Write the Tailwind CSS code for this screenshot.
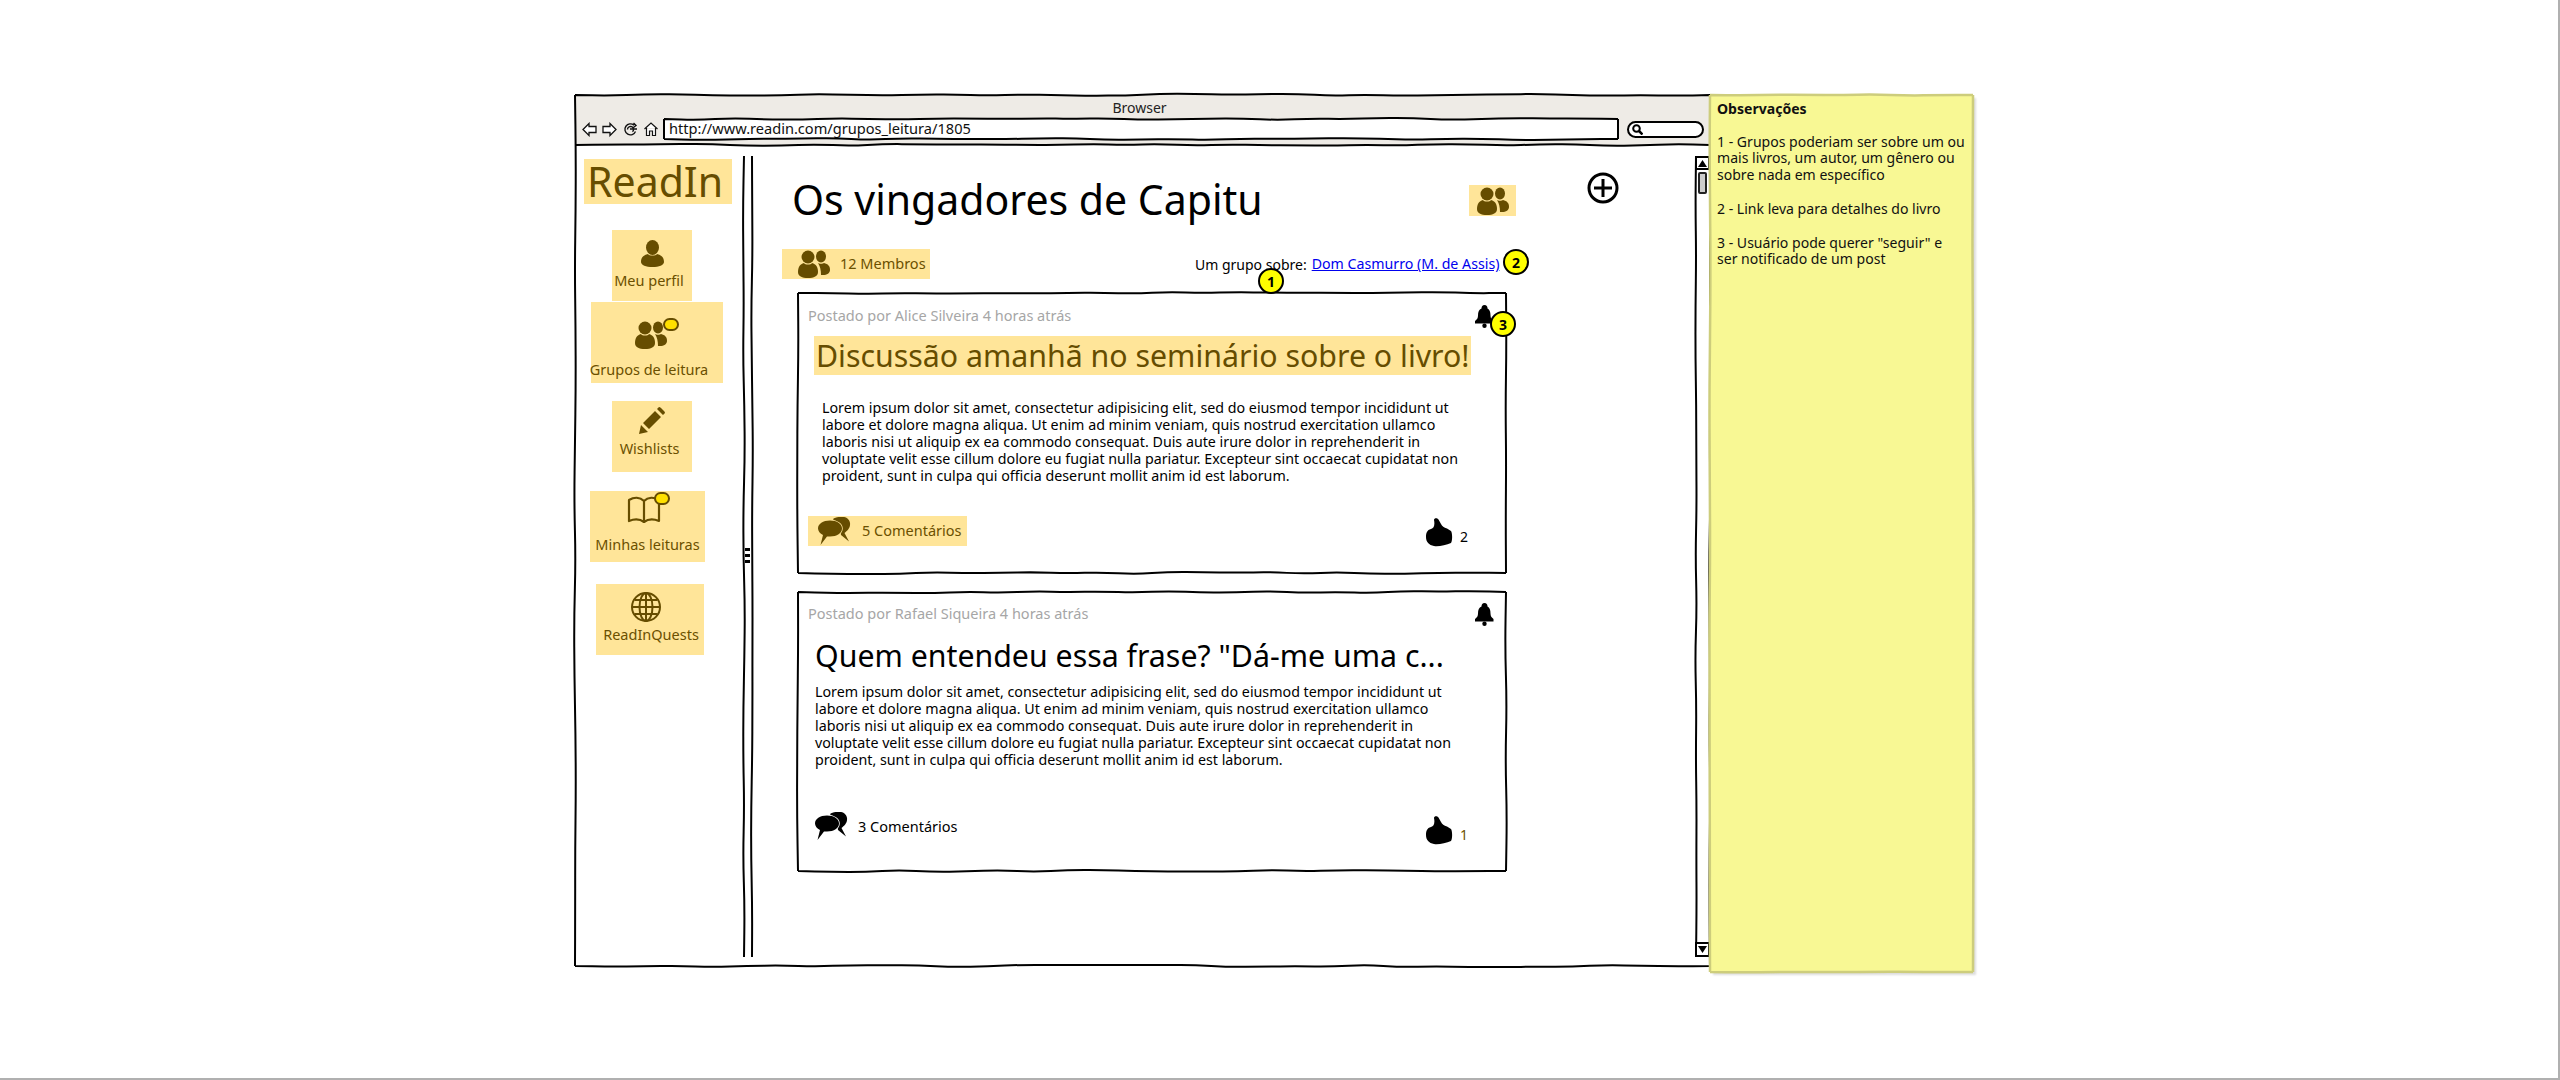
<!DOCTYPE html>
<html lang="pt-BR">
<head>
    <meta charset="UTF-8">
    <title>ReadIn - Grupo de leitura</title>
    <script src="https://cdn.jsdelivr.net/npm/@tailwindcss/browser@4"></script>
</head>
<body class="bg-white text-black font-['Noto_Sans',sans-serif] overflow-hidden">
    <!-- icon set -->
    <svg class="hidden">
        <symbol id="i-person" viewBox="0 0 23 27"><ellipse cx="11.500" cy="7.500" rx="6.500" ry="7.500"/><path d="M7 14c1 2 8 2 9 0 4 1 7 3 7 8 0 3-5 5-11.500 5S0 25 0 22c0-5 3-7 7-8z"/></symbol>
        <symbol id="i-group" viewBox="0 0 32 28"><circle cx="10" cy="7" r="6.500"/><path d="M6 13c1 2 7 2 8 0 4 1 6 4 6 9 0 4-4 6-10 6S0 26 0 22c0-5 2-8 6-9z"/><ellipse cx="23" cy="6.500" rx="5" ry="6"/><path d="M20 13c1 1 5 1 6 0 4 1 6 3 6 7 0 3-3 5-7 5h-2c0-5-1-9-3-12z"/></symbol>
        <symbol id="i-pencil" viewBox="0 0 26 27"><path d="M0 27l2-9 7 7zM4 16L16 4l6 6-12 12zM18 2l2-2q1 0 2 1l3 3q1 1 1 2l-2 2z"/></symbol>
        <symbol id="i-bell" viewBox="0 0 19 23"><path d="M9.500 0c2 0 3 1.500 3 3.500 2 1 3 3.500 3 7 0 2.500 1 4 3 5.500v2.500H0V16c2-1.500 3-3 3-5.500 0-3.500 1-6 3.500-7C6.500 1.500 7.500 0 9.500 0z"/><circle cx="9.500" cy="20.800" r="2.200"/></symbol>
        <symbol id="i-thumb" viewBox="0 0 27 29"><path d="M8 2C8 0 11-.5 12.500 1.500L15 6c1 2 3 4 6 4.500l4 2.500c1.500 2 1.500 10 0 12-5 2-13 4-17 3-5-1-8-4-8-9 0-4 1-7 5-8 3-1 4-4 3-9z"/></symbol>
        <symbol id="i-talk" viewBox="0 0 33 29"><path d="M15 2c3-2 9-3 13-1.500 3 1.500 4.500 4.500 4 7.500 0 3-3 6-5.500 8l4.500 8.500L23 18l-1-6z"/><path d="M12 3.500c7 0 12 3.500 12 8s-5 8-12 8H9L2.500 28 5 18c-3-1.500-5-4-5-6.500 0-4.500 5-8 12-8z" stroke="currentColor" stroke-width="1.500" paint-order="stroke"/></symbol>
    </svg>

    <div class="flex h-[1080px]">
    <div class="flex-1 flex flex-col">
        <div class="flex-1 pl-[575px] pt-[95px] flex items-start">

            <!-- browser window -->
            <div class="relative w-[1135px] h-[871px] flex flex-col">
                <div class="h-[50px] bg-[#eeebe6] flex flex-col">
                    <div class="h-[24px] flex items-center justify-center pr-[6px] text-[14px] text-[#222]">Browser</div>
                    <div class="flex items-center h-[20px] pl-[7px]">
                        <svg class="w-[15px] h-[15px]" viewBox="0 0 15 15" fill="#fff" stroke="#111" stroke-width="1.300"><path d="M1 7.500L7 1.500v3h7v6H7v3z"/></svg>
                        <svg class="w-[15px] h-[15px] ml-[5px]" viewBox="0 0 15 15" fill="#fff" stroke="#111" stroke-width="1.300"><path d="M14 7.500L8 1.500v3H1v6h7v3z"/></svg>
                        <svg class="w-[15px] h-[15px] ml-[6px]" viewBox="0 0 15 15" fill="none" stroke="#111" stroke-width="1.400"><path d="M12.500 9.500A5.500 5.500 0 1 1 11 3.200M4.500 7.500a3 3 0 1 1 5 2.200M7 7h7M10.500 1l2.500 2.500-2.500 2"/></svg>
                        <svg class="w-[14px] h-[14px] ml-[6px]" viewBox="0 0 14 14" fill="#fff" stroke="#111" stroke-width="1.200"><path d="M.5 7L7 1l6.500 6M2.500 6v7.500h3V9h3v4.500h3V6"/></svg>
                        <div class="relative ml-[6px] w-[954px] h-[20px] bg-white flex items-center pl-[5px] text-[14.600px] whitespace-nowrap text-[#111]">
                            http://www.readin.com/grupos_leitura/1805
                            <svg data-box data-w="954" data-h="20" class="absolute inset-0 w-full h-full overflow-visible"></svg>
                        </div>
                        <div class="ml-[9px] w-[77px] h-[17px] bg-white rounded-full border-2 border-black flex items-center pl-[3px]">
                            <svg class="w-[11px] h-[11px]" viewBox="0 0 11 11" fill="none" stroke="#000"><circle cx="4.500" cy="4.500" r="3.300" stroke-width="2"/><path d="M7 7l3.500 3.500" stroke-width="2.500"/></svg>
                        </div>
                    </div>
                </div>

                <div class="relative flex flex-1 pt-[11px]">
                    <svg data-hline data-w="1135" class="absolute left-0 top-0 w-full h-[2px] overflow-visible"></svg>

                    <!-- sidebar -->
                    <div class="w-[168px] text-[#6b5000] text-[14.500px]">
                        <div class="ml-[9px] mt-[3px] w-[148px] h-[45px] bg-[#ffe599] pl-[3px] text-[41px] leading-[45px] text-[#664d00]">ReadIn</div>
                        <a class="mt-[26px] ml-[37px] w-[80px] h-[71px] bg-[#ffe599] flex flex-col items-center pt-[10px]">
                            <svg class="w-[23px] h-[27px] fill-[#664d00]"><use href="#i-person"/></svg>
                            <span class="mt-[3px] mr-[6px]">Meu perfil</span>
                        </a>
                        <a class="mt-[1px] ml-[16px] w-[132px] h-[81px] bg-[#ffe599] flex flex-col items-center pt-[19px] relative">
                            <svg class="w-[32px] h-[28px] mr-[12px] fill-[#664d00]"><use href="#i-group"/></svg>
                            <span class="absolute left-[72px] top-[16px] w-[16px] h-[13px] rounded-full bg-[#ffe000] border-2 border-[#664d00]"></span>
                            <span class="mt-[10px] mr-[16px] whitespace-nowrap">Grupos de leitura</span>
                        </a>
                        <a class="mt-[18px] ml-[37px] w-[80px] h-[71px] bg-[#ffe599] flex flex-col items-center pt-[6px]">
                            <svg class="w-[26px] h-[27px] fill-[#664d00]"><use href="#i-pencil"/></svg>
                            <span class="mt-[4px] mr-[5px]">Wishlists</span>
                        </a>
                        <a class="mt-[19px] ml-[15px] w-[115px] h-[71px] bg-[#ffe599] flex flex-col items-center pt-[5px] relative">
                            <svg class="w-[34px] h-[27px] mr-[8px]" viewBox="0 0 34 27" fill="none" stroke="#664d00" stroke-width="2.200" stroke-linejoin="round"><path d="M2 4c5-3 11-3 15 1 4-4 10-4 15-1v21c-5-2-11-2-15 1-4-3-10-3-15-1zM17 5v21"/></svg>
                            <span class="absolute left-[64px] top-[1px] w-[16px] h-[13px] rounded-full bg-[#ffe000] border-2 border-[#664d00]"></span>
                            <span class="mt-[11px] whitespace-nowrap">Minhas leituras</span>
                        </a>
                        <a class="mt-[22px] ml-[21px] w-[108px] h-[71px] bg-[#ffe599] flex flex-col items-center pt-[8px]">
                            <svg class="w-[30px] h-[30px] mr-[8px]" viewBox="0 0 30 30" fill="none" stroke="#664d00" stroke-width="2"><circle cx="15" cy="15" r="14"/><ellipse cx="15" cy="15" rx="6.500" ry="14"/><path d="M15 1v28M1 15h28M3.500 8h23M3.500 22h23"/></svg>
                            <span class="mt-[2px] ml-[2px]">ReadInQuests</span>
                        </a>
                    </div>

                    <!-- splitter -->
                    <div class="relative w-[9px]">
                        <svg data-vline data-h="801" class="absolute left-0 top-0 w-[2px] h-[801px] overflow-visible"></svg>
                        <svg data-vline data-h="801" class="absolute left-[8px] top-0 w-[2px] h-[801px] overflow-visible"></svg>
                        <div class="absolute left-[2px] top-[392px] w-[5px] h-[15px] flex flex-col justify-between items-center bg-white">
                            <span class="w-[5px] h-[3px] bg-black"></span><span class="w-[5px] h-[3px] bg-black"></span><span class="w-[5px] h-[3px] bg-black"></span>
                        </div>
                    </div>

                    <!-- main content -->
                    <div class="relative flex-1 min-w-0">
                        <div class="flex items-start h-[93px]">
                            <h1 class="ml-[40px] mt-[19px] w-[677px] text-[41px] leading-[48px] whitespace-nowrap">Os vingadores de Capitu</h1>
                            <div class="mt-[29px] w-[47px] h-[31px] bg-[#ffe599] flex items-center justify-center">
                                <svg class="w-[32px] h-[28px] fill-[#664d00]"><use href="#i-group"/></svg>
                            </div>
                            <svg class="mt-[16px] ml-[71px] w-[32px] h-[32px]" viewBox="0 0 32 32" fill="none" stroke="#000" stroke-width="3"><circle cx="16" cy="16" r="14"/><path d="M16 7v18M7 16h18"/></svg>
                        </div>
                        <div class="flex items-center h-[30px] ml-[30px] relative">
                            <div class="w-[148px] h-[30px] bg-[#ffe599] flex items-center pl-[16px] text-[#6b5000] text-[14.500px]">
                                <svg class="w-[32px] h-[28px] fill-[#664d00]"><use href="#i-group"/></svg>
                                <span class="ml-[10px]">12 Membros</span>
                            </div>
                            <span class="ml-[265px] text-[14px] whitespace-nowrap">Um grupo sobre:</span>
                            <a class="ml-[5px] text-[14.200px] text-[#0000ee] underline whitespace-nowrap">Dom Casmurro (M. de Assis)</a>
                        </div>

                        <!-- post 1 -->
                        <div class="relative ml-[46px] mt-[14px] w-[708px] h-[280px] bg-white">
                            <svg data-box data-w="708" data-h="280" class="absolute inset-0 w-full h-full overflow-visible"></svg>
                            <div class="relative flex justify-between pt-[12px] pl-[10px] pr-[12px] h-[35px]">
                                <span class="text-[14.500px] leading-[21px] text-[#a6a6a6]">Postado por Alice Silveira 4 horas atrás</span>
                                <svg class="w-[19px] h-[23px]"><use href="#i-bell"/></svg>
                            </div>
                            <h2 class="relative ml-[16px] mt-[8px] w-[657px] h-[39px] bg-[#ffe599] pl-[2px] text-[30.300px] leading-[39px] text-[#664d00] whitespace-nowrap">Discussão amanhã no seminário sobre o livro!</h2>
                            <p class="relative ml-[24px] mt-[24px] text-[14.250px] leading-[17px] whitespace-nowrap">Lorem ipsum dolor sit amet, consectetur adipisicing elit, sed do eiusmod tempor incididunt ut<br>labore et dolore magna aliqua. Ut enim ad minim veniam, quis nostrud exercitation ullamco<br>laboris nisi ut aliquip ex ea commodo consequat. Duis aute irure dolor in reprehenderit in<br>voluptate velit esse cillum dolore eu fugiat nulla pariatur. Excepteur sint occaecat cupidatat non<br>proident, sunt in culpa qui officia deserunt mollit anim id est laborum.</p>
                            <div class="relative flex justify-between items-start mt-[32px] pl-[10px] pr-[38px]">
                                <div class="w-[159px] h-[30px] bg-[#ffe599] flex items-center pl-[10px] text-[#6b5000] text-[14.500px]">
                                    <svg class="w-[33px] h-[29px] fill-[#664d00] text-[#ffe599]"><use href="#i-talk"/></svg>
                                    <span class="ml-[11px]">5 Comentários</span>
                                </div>
                                <div class="flex items-center mt-[2px]">
                                    <svg class="w-[27px] h-[29px]"><use href="#i-thumb"/></svg>
                                    <span class="ml-[7px] mt-[8px] text-[14px]">2</span>
                                </div>
                            </div>
                        </div>

                        <!-- post 2 -->
                        <div class="relative ml-[46px] mt-[19px] w-[708px] h-[279px] bg-white">
                            <svg data-box data-w="708" data-h="279" class="absolute inset-0 w-full h-full overflow-visible"></svg>
                            <div class="relative flex justify-between pt-[11px] pl-[10px] pr-[12px] h-[34px]">
                                <span class="text-[14.500px] leading-[21px] text-[#a6a6a6]">Postado por Rafael Siqueira 4 horas atrás</span>
                                <svg class="w-[19px] h-[23px]"><use href="#i-bell"/></svg>
                            </div>
                            <h2 class="relative ml-[17px] mt-[10px] h-[39px] text-[30.300px] leading-[39px] whitespace-nowrap">Quem entendeu essa frase? "Dá-me uma c...</h2>
                            <p class="relative ml-[17px] mt-[8px] text-[14.250px] leading-[17px] whitespace-nowrap">Lorem ipsum dolor sit amet, consectetur adipisicing elit, sed do eiusmod tempor incididunt ut<br>labore et dolore magna aliqua. Ut enim ad minim veniam, quis nostrud exercitation ullamco<br>laboris nisi ut aliquip ex ea commodo consequat. Duis aute irure dolor in reprehenderit in<br>voluptate velit esse cillum dolore eu fugiat nulla pariatur. Excepteur sint occaecat cupidatat non<br>proident, sunt in culpa qui officia deserunt mollit anim id est laborum.</p>
                            <div class="relative flex justify-between items-start mt-[44px] pl-[17px] pr-[38px]">
                                <div class="flex items-center text-[14.500px]">
                                    <svg class="w-[33px] h-[29px] text-white"><use href="#i-talk"/></svg>
                                    <span class="ml-[10px]">3 Comentários</span>
                                </div>
                                <div class="flex items-center mt-[4px]">
                                    <svg class="w-[27px] h-[29px]"><use href="#i-thumb"/></svg>
                                    <span class="ml-[7px] mt-[8px] text-[14px] text-[#6b5000]">1</span>
                                </div>
                            </div>
                        </div>

                        <!-- numbered markers -->
                        <span class="absolute left-[506px] top-[112px] w-[26px] h-[26px] rounded-full bg-[#ffff00] border-2 border-black flex items-center justify-center text-[14px] font-bold">1</span>
                        <span class="absolute left-[751px] top-[93px] w-[26px] h-[26px] rounded-full bg-[#ffff00] border-2 border-black flex items-center justify-center text-[14px] font-bold">2</span>
                        <span class="absolute left-[738px] top-[155px] w-[26px] h-[26px] rounded-full bg-[#ffff00] border-2 border-black flex items-center justify-center text-[14px] font-bold">3</span>
                    </div>

                    <!-- scrollbar -->
                    <div class="relative w-[15px] h-[801px] flex flex-col justify-between">
                        <svg data-vline data-h="801" class="absolute left-0 top-0 w-[2px] h-full overflow-visible"></svg>
                        <div class="relative h-[14px] border-2 border-black bg-white flex items-center justify-center">
                            <svg class="w-[9px] h-[7px]" viewBox="0 0 9 7"><path d="M4.500 0L9 7H0z"/></svg>
                        </div>
                        <div class="absolute left-[3px] top-[16px] w-[9px] h-[22px] bg-[#ccc] border-2 border-[#222] rounded-[2px]"></div>
                        <div class="relative h-[15px] border-2 border-black bg-white flex items-center justify-center">
                            <svg class="w-[9px] h-[7px]" viewBox="0 0 9 7"><path d="M4.500 7L0 0h9z"/></svg>
                        </div>
                    </div>
                </div>

                <svg data-box data-w="1135" data-h="871" class="absolute inset-0 w-full h-full overflow-visible"></svg>
            </div>

            <!-- sticky note -->
            <div class="relative w-[263px] h-[877px] bg-[#f8f894] shadow-[3px_3px_2px_#ddd] pl-[7px] pt-[6px] text-[14.050px] leading-[16.700px] text-[#111] whitespace-nowrap">
                <svg data-note data-w="263" data-h="877" class="absolute inset-0 w-full h-full overflow-visible"></svg>
                <p class="relative font-bold">Observações</p>
                <p class="relative mt-[16px]">1 - Grupos poderiam ser sobre um ou<br>mais livros, um autor, um gênero ou<br>sobre nada em específico</p>
                <p class="relative mt-[17px]">2 - Link leva para detalhes do livro</p>
                <p class="relative mt-[17px]">3 - Usuário pode querer "seguir" e<br>ser notificado de um post</p>
            </div>
        </div>
        <div class="h-[2px] bg-[#b0b0b0]"></div>
    </div>
    <div class="w-[2px] bg-[#b0b0b0]"></div>
    </div>

    <script>
        // hand drawn lines, same seed every run so the picture stays stable
        let seed = 7;
        function rnd() {
            seed = (seed * 16807) % 2147483647;
            return seed / 2147483647;
        }

        function wobble(x1, y1, x2, y2, step, amp) {
            const len = Math.hypot(x2 - x1, y2 - y1);
            const n = Math.max(1, Math.round(len / step));
            const nx = (y2 - y1) / len, ny = (x1 - x2) / len;
            let pts = [];
            for (let i = 0; i <= n; i++) {
                const t = i / n;
                const off = (i == 0 || i == n) ? 0 : (rnd() - 0.5) * amp * 2;
                pts.push([x1 + (x2 - x1) * t + nx * off, y1 + (y2 - y1) * t + ny * off]);
            }
            let d = `M${pts[0][0]} ${pts[0][1]}`;
            for (let i = 1; i < pts.length; i++) {
                const mx = (pts[i - 1][0] + pts[i][0]) / 2, my = (pts[i - 1][1] + pts[i][1]) / 2;
                d += `Q${pts[i - 1][0]} ${pts[i - 1][1]} ${mx} ${my}`;
            }
            return d + `L${x2} ${y2}`;
        }

        function draw(svg, d, color, width) {
            svg.innerHTML = `<path d="${d}" fill="none" stroke="${color}" stroke-width="${width}"/>`;
        }

        function boxPath(w, h, amp) {
            return wobble(0, 0, w, 0, 34, amp) + wobble(w, 0, w, h, 60, amp * 0.8) +
                wobble(w, h, 0, h, 34, amp) + wobble(0, h, 0, 0, 60, amp * 0.8);
        }

        document.querySelectorAll("[data-box]").forEach(svg => {
            draw(svg, boxPath(+svg.dataset.w, +svg.dataset.h, 1.2), "#000", 2);
        });
        document.querySelectorAll("[data-note]").forEach(svg => {
            draw(svg, boxPath(+svg.dataset.w, +svg.dataset.h, 0.7), "#cdcd7c", 2.5);
        });
        document.querySelectorAll("[data-hline]").forEach(svg => {
            draw(svg, wobble(0, 0, +svg.dataset.w, 0, 34, 1.2), "#000", 2);
        });
        document.querySelectorAll("[data-vline]").forEach(svg => {
            draw(svg, wobble(1, 0, 1, +svg.dataset.h, 50, 1), "#000", 2);
        });
    </script>
</body>
</html>
